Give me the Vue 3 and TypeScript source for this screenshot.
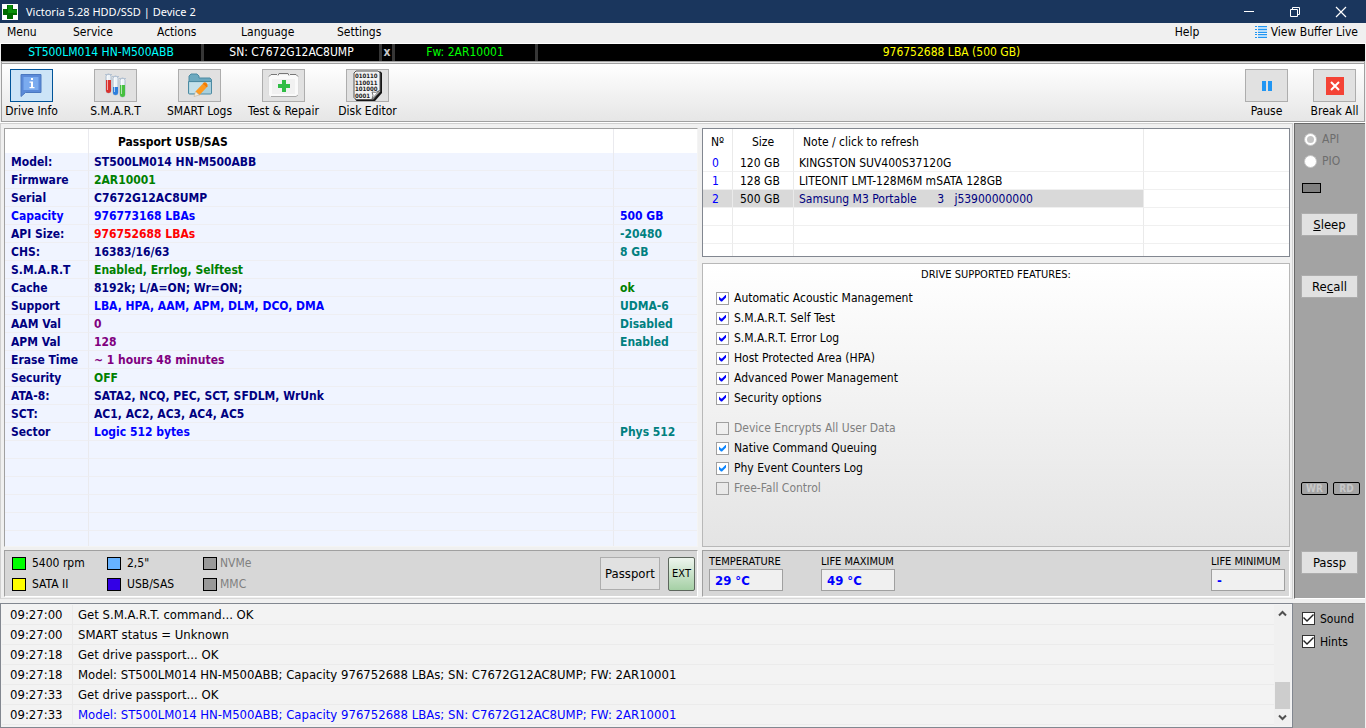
<script setup lang="ts">
interface PassportRow {
  name: string
  value: string
  extra?: string
  nameTone?: string
  valueTone?: string
  extraTone?: string
}

const menus = [
  { text: 'Menu', size: 'w66' },
  { text: 'Service', size: 'w84' },
  { text: 'Actions', size: 'w84' },
  { text: 'Language', size: 'w96' },
  { text: 'Settings', size: 'w96' },
]

const passport: PassportRow[] = [
  { name: 'Model:', value: 'ST500LM014 HN-M500ABB' },
  { name: 'Firmware', value: '2AR10001', valueTone: 'green' },
  { name: 'Serial', value: 'C7672G12AC8UMP' },
  { name: 'Capacity', value: '976773168 LBAs', extra: '500 GB', nameTone: 'blue', valueTone: 'blue', extraTone: 'blue' },
  { name: 'API Size:', value: '976752688 LBAs', extra: '-20480', valueTone: 'red' },
  { name: 'CHS:', value: '16383/16/63', extra: '8 GB' },
  { name: 'S.M.A.R.T', value: 'Enabled, Errlog, Selftest', valueTone: 'green' },
  { name: 'Cache', value: '8192k; L/A=ON; Wr=ON;', extra: 'ok', extraTone: 'green' },
  { name: 'Support', value: 'LBA, HPA, AAM, APM, DLM, DCO, DMA', extra: 'UDMA-6', valueTone: 'blue' },
  { name: 'AAM Val', value: '0', extra: 'Disabled', valueTone: 'purple' },
  { name: 'APM Val', value: '128', extra: 'Enabled', valueTone: 'purple' },
  { name: 'Erase Time', value: '~ 1 hours 48 minutes', valueTone: 'purple' },
  { name: 'Security', value: 'OFF', valueTone: 'green' },
  { name: 'ATA-8:', value: 'SATA2, NCQ, PEC, SCT, SFDLM, WrUnk' },
  { name: 'SCT:', value: 'AC1, AC2, AC3, AC4, AC5' },
  { name: 'Sector', value: 'Logic 512 bytes', extra: 'Phys 512', valueTone: 'blue' },
]

const drives = [
  { no: '0', size: '120 GB', note: 'KINGSTON SUV400S37120G', active: false },
  { no: '1', size: '128 GB', note: 'LITEONIT LMT-128M6M mSATA 128GB', active: false },
  { no: '2', size: '500 GB', note: 'Samsung M3 Portable      3   j53900000000', active: true },
]

const features = [
  { text: 'Automatic Acoustic Management', on: true, tone: 'deep' },
  { text: 'S.M.A.R.T. Self Test', on: true, tone: 'deep' },
  { text: 'S.M.A.R.T. Error Log', on: true, tone: 'deep' },
  { text: 'Host Protected Area (HPA)', on: true, tone: 'deep' },
  { text: 'Advanced Power Management', on: true, tone: 'deep' },
  { text: 'Security options', on: true, tone: 'deep' },
]

const moreFeatures = [
  { text: 'Device Encrypts All User Data', on: false, tone: 'off' },
  { text: 'Native Command Queuing', on: true, tone: 'sky' },
  { text: 'Phy Event Counters Log', on: true, tone: 'sky' },
  { text: 'Free-Fall Control', on: false, tone: 'off' },
]

const legend = [
  { text: '5400 rpm', tone: 'lime', off: false },
  { text: '2,5"', tone: 'sky', off: false },
  { text: 'NVMe', tone: 'none', off: true },
  { text: 'SATA II', tone: 'yellow', off: false },
  { text: 'USB/SAS', tone: 'indigo', off: false },
  { text: 'MMC', tone: 'none', off: true },
]

const log = [
  { time: '09:27:00', text: 'Get S.M.A.R.T. command... OK', last: false },
  { time: '09:27:00', text: 'SMART status = Unknown', last: false },
  { time: '09:27:18', text: 'Get drive passport... OK', last: false },
  { time: '09:27:18', text: 'Model: ST500LM014 HN-M500ABB; Capacity 976752688 LBAs; SN: C7672G12AC8UMP; FW: 2AR10001', last: false },
  { time: '09:27:33', text: 'Get drive passport... OK', last: false },
  { time: '09:27:33', text: 'Model: ST500LM014 HN-M500ABB; Capacity 976752688 LBAs; SN: C7672G12AC8UMP; FW: 2AR10001', last: true },
]
</script>

<template>
  <div class="app">
    <header class="titlebar">
      <svg class="logo" width="16" height="16" viewBox="0 0 16 16">
        <rect width="16" height="16" fill="#fff" />
        <path d="M5 1h6v4h4v6h-4v4H5v-4H1V5h4z" fill="#006b00" />
        <path d="M6 1h4v5h5v3H6z" fill="#0a8f0a" />
      </svg>
      <span class="title">Victoria 5.28 HDD/SSD | Device 2</span>
      <div class="win">
        <button type="button" aria-label="Minimize">
          <svg width="12" height="12" viewBox="0 0 12 12"><path d="M1 5.500h10" stroke="#fff" /></svg>
        </button>
        <button type="button" aria-label="Restore">
          <svg width="12" height="12" viewBox="0 0 12 12" fill="none" stroke="#fff"><path d="M1.500 3.500h7v7h-7zM3.500 3.500v-2h7v7h-2" /></svg>
        </button>
        <button type="button" aria-label="Close">
          <svg width="12" height="12" viewBox="0 0 12 12"><path d="M1 1l10 10M11 1L1 11" stroke="#fff" stroke-width="1.200" /></svg>
        </button>
      </div>
    </header>

    <nav class="menubar">
      <button v-for="m in menus" :key="m.text" type="button" :class="m.size">{{ m.text }}</button>
      <button type="button" class="help">Help</button>
      <button type="button" class="live">
        <svg width="12" height="12" viewBox="0 0 12 12" shape-rendering="crispEdges">
          <path d="M0 0h2v1H0zM0 3h2v1H0zM0 6h2v1H0zM0 8h2v1H0zM0 11h2v1H0zM3 0h9v1H3zM3 3h9v1H3zM3 6h9v1H3zM3 8h9v1H3zM3 11h9v1H3z" fill="#2196f3" />
          <path d="M3 1h9v2H3zM3 4h9v2H3zM3 9h9v2H3z" fill="#b5dcfb" />
        </svg>
        View Buffer Live
      </button>
    </nav>

    <div class="status">
      <span class="seg model">ST500LM014 HN-M500ABB</span>
      <span class="seg serial">SN: C7672G12AC8UMP</span>
      <button type="button" class="seg close">x</button>
      <span class="seg fw">Fw: 2AR10001</span>
      <span class="seg lba">976752688 LBA (500 GB)</span>
    </div>

    <div class="toolbar">
      <div class="tool">
        <button id="t-info" type="button" class="on">
          <svg width="23" height="25" viewBox="0 0 23 25">
            <path d="M1 1.500h20v18H5.500L1 23.500z" fill="#5b8ad8" stroke="#4a78c0" />
            <path d="M3.500 4h15v13H3.500z" fill="#7aabef" />
            <path d="M11 5h2v2h-2zM9.500 8.500H13V14h1.500v1.300h-5V14H11V9.800H9.500z" fill="#fff" />
          </svg>
        </button>
        <label for="t-info">Drive Info</label>
      </div>
      <div class="tool">
        <button id="t-smart" type="button">
          <svg width="22" height="26" viewBox="0 0 22 26">
            <rect x="1" y="1" width="5" height="19" rx="2.500" fill="#eef3f8" stroke="#9db0c4" stroke-width=".8" />
            <path d="M1 7h5v10.500a2.500 2.500 0 0 1-5 0z" fill="#d9322e" />
            <rect x="8" y="3" width="5" height="19" rx="2.500" fill="#eef3f8" stroke="#9db0c4" stroke-width=".8" />
            <path d="M8 14h5v5.500a2.500 2.500 0 0 1-5 0z" fill="#2f7fdc" />
            <rect x="15" y="5" width="5" height="19" rx="2.500" fill="#eef3f8" stroke="#9db0c4" stroke-width=".8" />
            <path d="M15 12h5v9.500a2.500 2.500 0 0 1-5 0z" fill="#46c040" />
            <path d="M2.500 3v14M9.500 5v14M16.500 7v14" stroke="#fff" stroke-opacity=".6" />
            <path d="M0 1.500h7M7 3.500h7M14 5.500h7" stroke="#b4c2d2" />
          </svg>
        </button>
        <label for="t-smart">S.M.A.R.T</label>
      </div>
      <div class="tool">
        <button id="t-logs" type="button">
          <svg width="26" height="25" viewBox="0 0 26 25">
            <path d="M2 6V3l2-2h6l2 2v2h11l1.500 1.500V20H2z" fill="#6da9bf" stroke="#4c8ba3" />
            <path d="M1.500 8.500h23V20q0 1-1 1h-21q-1 0-1-1z" fill="#a9d0dd" stroke="#4c8ba3" />
            <path d="M2.500 9.500h21L8 20H2.500z" fill="#c5e1ea" />
            <path d="M15.500 11l4 3.500-7 7.500-4-3.500z" fill="#ff9a1f" />
            <path d="M16.500 9.800q1.500-1 3 .3t1 3.200l-1 1.200-4-3.500z" fill="#f57c00" />
            <path d="M8.500 18.500l4 3.500-5.500 1.500z" fill="#f5ead8" stroke="#b5aa95" stroke-width=".5" />
          </svg>
        </button>
        <label for="t-logs">SMART Logs</label>
      </div>
      <div class="tool">
        <button id="t-test" type="button">
          <svg width="31" height="27" viewBox="0 0 31 27">
            <path d="M1 5l2-2.500h25L30 5v18l-2 2H3l-2-2z" fill="#fafafa" />
            <path d="M1 4.500l2-2h6M22 2.500h6l2 2M10 3.500l1-2h9l1 2" fill="none" stroke="#777" />
            <path d="M3 24.500h25l2-1.500" fill="none" stroke="#aaa" />
            <path d="M.5 5v17M30.500 5v17" stroke="#ddd" />
            <rect x="4" y="7" width="23" height="15" fill="#f1f1f1" />
            <path d="M14 8h4v4h4v4h-4v4h-4v-4h-4v-4h4z" fill="#30bd45" />
          </svg>
        </button>
        <label for="t-test">Test &amp; Repair</label>
      </div>
      <div class="tool">
        <button id="t-disk" type="button">
          <svg width="29" height="31" viewBox="0 0 29 31">
            <path d="M3.500 1.500h24l1.500 1.500v20l-7 8H3.500L2 29V3z" fill="#161616" />
            <path d="M3 1h22l2 2v18.500l-7 8H3l-2-2V3z" fill="#f2f2f2" stroke="#555" />
            <text x="2" y="8" class="bits">010110</text>
            <text x="2" y="15" class="bits">110011</text>
            <text x="2" y="21" class="bits">101000</text>
            <text x="2" y="28" class="bits">0001</text>
            <path d="M26.500 20.500l-7.500 8.500q2-4 0-7 4 1.500 7.500-1.500z" fill="#fff" stroke="#555" stroke-width=".8" />
          </svg>
        </button>
        <label for="t-disk">Disk Editor</label>
      </div>
      <div class="fill"></div>
      <div class="tools-right">
        <div class="tool">
          <button id="t-pause" type="button">
            <svg width="10" height="10" viewBox="0 0 10 10"><path d="M0 0h4v10H0zM6 0h4v10H6z" fill="#2196f3" /></svg>
          </button>
          <label for="t-pause">Pause</label>
        </div>
        <div class="tool">
          <button id="t-break" type="button">
            <svg width="18" height="18" viewBox="0 0 18 18"><rect width="18" height="18" fill="#f44336" /><path d="M5 5l8 8M13 5l-8 8" stroke="#fff" stroke-width="2" /></svg>
          </button>
          <label for="t-break">Break All</label>
        </div>
      </div>
    </div>

    <main class="main">
      <div class="work">
        <section class="left">
          <div class="frame passport">
            <table>
              <colgroup><col class="c-name" /><col /><col class="c-extra" /></colgroup>
              <thead>
                <tr><th></th><th class="cap">Passport USB/SAS</th><th></th></tr>
              </thead>
              <tbody>
                <tr v-for="r in passport" :key="r.name">
                  <td :class="r.nameTone || 'navy'">{{ r.name }}</td>
                  <td :class="r.valueTone || 'navy'">{{ r.value }}</td>
                  <td :class="r.extraTone || 'teal'">{{ r.extra }}</td>
                </tr>
                <tr v-for="n in 5" :key="n"><td></td><td></td><td></td></tr>
                <tr class="rest"><td></td><td></td><td></td></tr>
              </tbody>
            </table>
          </div>
          <div class="strip">
            <ul class="legend">
              <li v-for="l in legend" :key="l.text" :class="{ off: l.off }">
                <span class="swatch" :class="l.tone"></span>{{ l.text }}
              </li>
            </ul>
            <button type="button" class="btn big">Passport</button>
            <button type="button" class="ext">EXT</button>
          </div>
        </section>

        <section class="right">
          <div class="frame drives">
            <table>
              <colgroup><col class="d-no" /><col class="d-size" /><col class="d-note" /><col /></colgroup>
              <thead>
                <tr><th>Nº</th><th>Size</th><th class="note">Note / click to refresh</th><th></th></tr>
              </thead>
              <tbody>
                <tr v-for="d in drives" :key="d.no" :class="{ active: d.active }">
                  <td class="no">{{ d.no }}</td>
                  <td class="size">{{ d.size }}</td>
                  <td class="note">{{ d.note }}</td>
                  <td></td>
                </tr>
                <tr v-for="n in 2" :key="n"><td></td><td></td><td></td><td></td></tr>
                <tr class="rest"><td></td><td></td><td></td><td></td></tr>
              </tbody>
            </table>
          </div>

          <div class="features">
            <h2>DRIVE SUPPORTED FEATURES:</h2>
            <div class="group">
              <label v-for="f in features" :key="f.text" class="check" :class="f.tone">
                <input type="checkbox" :checked="f.on" />{{ f.text }}
              </label>
            </div>
            <div class="group">
              <label v-for="f in moreFeatures" :key="f.text" class="check" :class="f.tone">
                <input type="checkbox" :checked="f.on" :disabled="!f.on" />{{ f.text }}
              </label>
            </div>
          </div>

          <div class="strip temps">
            <label class="temp">TEMPERATURE<input type="text" readonly value="29 °C" /></label>
            <label class="temp">LIFE MAXIMUM<input type="text" readonly value="49 °C" /></label>
            <label class="temp min">LIFE MINIMUM<input type="text" readonly value="-" /></label>
          </div>
        </section>
      </div>

      <aside class="side">
        <label class="mode"><input type="radio" name="mode" checked disabled />API</label>
        <label class="mode"><input type="radio" name="mode" disabled />PIO</label>
        <div class="led"></div>
        <button type="button" class="btn small sleep"><u>S</u>leep</button>
        <button type="button" class="btn small recall">Re<u>c</u>all</button>
        <div class="fill"></div>
        <div class="flags"><span>WR</span><span>RD</span></div>
        <button type="button" class="btn small passp">Passp</button>
      </aside>
    </main>

    <footer class="bottom">
      <div class="log">
        <table>
          <colgroup><col class="l-time" /><col /></colgroup>
          <tbody>
            <tr v-for="(l, i) in log" :key="i">
              <td>{{ l.time }}</td>
              <td :class="{ blue: l.last }">{{ l.text }}</td>
            </tr>
          </tbody>
        </table>
        <div class="scroll">
          <button type="button" aria-label="Scroll up"><svg width="9" height="7" viewBox="0 0 9 7"><path d="M1 5.500l3.500-3.500L8 5.500" fill="none" stroke="#505050" stroke-width="2" /></svg></button>
          <div class="track"><div class="thumb"></div></div>
          <button type="button" aria-label="Scroll down"><svg width="9" height="7" viewBox="0 0 9 7"><path d="M1 1.500L4.500 5 8 1.500" fill="none" stroke="#505050" stroke-width="2" /></svg></button>
        </div>
      </div>
      <div class="opts">
        <label class="check plain"><input type="checkbox" checked />Sound</label>
        <label class="check plain"><input type="checkbox" checked />Hints</label>
      </div>
    </footer>
  </div>
</template>

<style>
body {
  margin: 0;
}
</style>

<style scoped>
.app {
  box-sizing: border-box;
  min-height: 100vh;
  display: flex;
  flex-direction: column;
  background: #f0f0f0;
  color: #000;
  font: 12px/16px "DejaVu Sans Condensed", "DejaVu Sans", sans-serif;
  font-stretch: condensed;
}
.app *,
.app *::before {
  box-sizing: border-box;
}
button,
input {
  margin: 0;
  padding: 0;
  font: inherit;
  color: inherit;
  border: 0;
  border-radius: 0;
  background: none;
}
svg {
  display: block;
}
.fill {
  flex: 1;
}

.titlebar {
  display: flex;
  align-items: center;
  height: 23px;
  padding-left: 2px;
  background: #1a365d;
  color: #fff;
  font-family: "Noto Sans", "Open Sans", sans-serif;
  font-size: 11px;
}
.title {
  flex: 1;
  padding-left: 8px;
}
.win {
  display: flex;
  padding-right: 2px;
}
.win button {
  width: 46px;
  height: 20px;
  display: flex;
  align-items: center;
  justify-content: center;
}

.menubar {
  display: flex;
  align-items: center;
  height: 21px;
  padding: 0 8px 2px 7px;
  border-bottom: 1px solid #fff;
}
.menubar button {
  text-align: left;
  white-space: nowrap;
}
.w66 {
  width: 66px;
}
.w84 {
  width: 84px;
}
.w96 {
  width: 96px;
}
.menubar .help {
  margin-left: auto;
  width: 80px;
}
.menubar .live {
  display: flex;
  align-items: center;
  gap: 4px;
}

.status {
  display: flex;
  height: 17px;
  margin: 0 1px;
  background: #000;
}
.seg {
  text-align: center;
  line-height: 17px;
  white-space: nowrap;
  border-right: 3px solid #363636;
}
.model {
  width: 203px;
  color: #00ffff;
}
.serial {
  width: 178px;
  color: #fff;
}
.close {
  width: 13px;
  color: #c8c8c8;
  font-weight: bold;
}
.fw {
  width: 143px;
  color: #00ff00;
}
.lba {
  flex: 1;
  border: 0;
  color: #ffff00;
}

.toolbar {
  display: flex;
  gap: 25px;
  height: 61px;
  margin: 0 1px;
  padding-top: 5px;
  border: 1px solid #a0a0a0;
  border-top: 3px double #a0a0a0;
  background: linear-gradient(#fff, #e6e6e6);
}
.tools-right {
  display: flex;
  gap: 9px;
}
.tool {
  width: 59px;
  display: flex;
  flex-direction: column;
  align-items: center;
}
.tool button {
  width: 43px;
  height: 33px;
  display: flex;
  align-items: center;
  justify-content: center;
  border: 1px solid #adadad;
  background: #e1e1e1;
}
.tool button.on {
  border-color: #005499;
  background: #cce4f7;
}
.tool label {
  line-height: 18px;
  white-space: nowrap;
}
.bits {
  font: bold 6px "DejaVu Sans Condensed", "DejaVu Sans", sans-serif;
  fill: #222;
}

.main {
  flex: 1;
  display: flex;
  border-top: 1px solid #fff;
}
.work {
  flex: 1;
  display: grid;
  grid-template-columns: 694fr 588fr;
  gap: 4px;
  padding: 4px 2px 1px 3px;
  border: 1px solid #d0d0d0;
  border-bottom-color: #d8d8d8;
}
.left,
.right {
  display: flex;
  flex-direction: column;
  min-width: 0;
}
.frame {
  border: 1px solid #828790;
  background: #fff;
}
table {
  width: 100%;
  border-collapse: separate;
  border-spacing: 0;
  table-layout: fixed;
}
td,
th {
  padding: 0 5px;
  font-weight: inherit;
  text-align: left;
  white-space: pre;
  overflow: hidden;
}
.passport {
  flex: 1;
  display: flex;
  border-color: #a0a0a0 #f4f4f4 #f4f4f4 #a0a0a0;
  font-weight: bold;
}
.passport td,
.passport th {
  height: 18px;
  padding: 2px 5px 0;
  line-height: 15px;
  border-bottom: 1px solid #eeeef2;
  border-right: 1px solid #eaeaee;
}
.passport td {
  background: #f0f4ff;
}
.passport th {
  height: 24px;
  border-bottom: 0;
}
.passport td:first-child,
.passport td:last-child {
  padding-left: 6px;
}
.passport .cap {
  padding-left: 29px;
}
.passport tr :last-child {
  border-right: 0;
}
.passport .rest td {
  height: auto;
  padding: 0;
  border-bottom: 0;
}
.c-name {
  width: 84px;
}
.c-extra {
  width: 83px;
}
.navy {
  color: #000080;
}
.green {
  color: #008000;
}
.blue {
  color: #0000ff;
}
.red {
  color: #ff0000;
}
.teal {
  color: #008080;
}
.purple {
  color: #800080;
}

.strip {
  display: flex;
  align-items: center;
  height: 47px;
  margin-top: 3px;
  border: 1px solid #a0a0a0;
  border-right-color: #fff;
  border-bottom-color: #fff;
  background: #d7d7d7;
}
.legend {
  flex: 1;
  display: grid;
  grid-template-columns: 95px 96px 96px;
  grid-auto-rows: 21px;
  margin: 0;
  padding: 0 0 0 7px;
  list-style: none;
}
.legend li {
  display: flex;
  align-items: center;
  gap: 6px;
  white-space: nowrap;
}
.legend .off {
  gap: 3px;
  color: #808080;
}
.swatch {
  width: 14px;
  height: 13px;
  border: 1px solid #000;
  background: #999;
}
.swatch.lime {
  background: #00ff00;
}
.swatch.sky {
  background: #66b2ff;
}
.swatch.yellow {
  background: #ffff00;
}
.swatch.indigo {
  background: #3300e6;
}
.btn {
  border: 1px solid #adadad;
  background: #e1e1e1;
  text-align: center;
  font-size: 13px;
}
.big {
  width: 60px;
  height: 33px;
}
.ext {
  width: 27px;
  height: 34px;
  margin: 0 2px 0 8px;
  border: 1px solid #5c665c;
  border-radius: 2px;
  background: linear-gradient(#eef5ee, #a5d0a5);
  font-size: 11px;
}

.drives {
  height: 129px;
}
.drives td,
.drives th {
  height: 18px;
  padding: 2px 5px 0;
  line-height: 15px;
  border-bottom: 1px solid #f0f0f0;
  border-right: 1px solid #eaeaea;
}
.drives th {
  height: 25px;
  border-bottom: 0;
  text-align: center;
}
.drives tr :last-child {
  border-right: 0;
}
.drives th.note {
  padding-left: 9px;
  text-align: left;
}
.drives td.no {
  padding-left: 9px;
  color: #0000ff;
}
.drives td.size {
  padding: 2px 7px 0;
}
.drives .rest td {
  height: 12px;
  padding: 0;
  border-bottom: 0;
}
.active td:not(:last-child) {
  background: #d9d9d9;
}
.active .note {
  color: #000080;
}
.d-no {
  width: 30px;
}
.d-size {
  width: 61px;
}
.d-note {
  width: 350px;
}

.features {
  flex: 1;
  margin-top: 6px;
  padding: 3px 13px 0;
  border: 1px solid #b8b8b8;
  background: linear-gradient(#fff, #e4e4e4);
}
.features h2 {
  margin: 0 0 5px;
  font-size: 11px;
  font-weight: normal;
  line-height: 16px;
  text-align: center;
}
.group {
  display: flex;
  flex-direction: column;
  margin-bottom: 10px;
}
.check {
  display: flex;
  align-items: center;
  gap: 5px;
  height: 20px;
  white-space: nowrap;
}
.check input {
  appearance: none;
  flex: none;
  width: 13px;
  height: 13px;
  border: 1px solid #a0a0a0;
  background: #fff;
  display: grid;
  place-items: center;
}
.check input:checked::before {
  content: "";
  width: 7px;
  height: 7px;
  background: #0000ff;
  clip-path: polygon(0 2px, 2px 4px, 3px 4px, 7px 0, 7px 3px, 3px 7px, 2px 7px, 0 5px);
}
.check.sky input:checked::before {
  background: #0a84ff;
}
.check.off {
  color: #808080;
}
.check.off input {
  background: transparent;
}

.temps {
  align-items: flex-start;
  gap: 38px;
  padding: 3px 4px 0 6px;
}
.temp {
  width: 74px;
  font-size: 11px;
  line-height: 15px;
  white-space: nowrap;
}
.temp input {
  display: block;
  width: 74px;
  height: 22px;
  padding: 0 5px;
  border: 1px solid #a0a0a0;
  background: #f0f0f0;
  color: #0000ff;
  font-size: 13px;
  font-weight: bold;
}
.temp.min {
  margin-left: auto;
}

.side {
  width: 71px;
  margin: 0 1px 0 1px;
  padding: 4px 5px 24px 6px;
  display: flex;
  flex-direction: column;
  border-left: 1px solid #696969;
  border-top: 1px solid #696969;
  border-bottom: 1px solid #fff;
  background: #a3a3a3;
}
.mode {
  display: flex;
  align-items: center;
  gap: 5px;
  height: 22px;
  padding-left: 3px;
  color: #6d6d6d;
}
.mode input {
  appearance: none;
  width: 13px;
  height: 13px;
  border: 1px solid #c4c4c4;
  border-radius: 50%;
  background: #fff;
  display: grid;
  place-items: center;
}
.mode input:checked::before {
  content: "";
  width: 7px;
  height: 7px;
  border-radius: 50%;
  background: #c4c4c4;
}
.led {
  width: 19px;
  height: 10px;
  margin: 11px 0 20px 1px;
  border: 1px solid #000;
  background: #808080;
}
.small {
  width: 57px;
  height: 23px;
}
.recall {
  margin-top: 39px;
}
.flags {
  display: flex;
  gap: 5px;
}
.flags span {
  width: 27px;
  height: 13px;
  border: 1px solid #000;
  border-radius: 2px;
  color: #c8c8c8;
  font-size: 10px;
  line-height: 11px;
  font-weight: bold;
  text-align: center;
}
.passp {
  margin-top: 56px;
}

.bottom {
  display: flex;
  margin-top: 4px;
  padding-right: 1px;
}
.log {
  flex: 1;
  display: flex;
  height: 125px;
  padding: 1px;
  border: 1px solid #828790;
  background: #f3f3f3;
  font-size: 13px;
}
.log table {
  align-self: flex-start;
}
.log td {
  height: 20px;
  padding: 1px 5px 0;
  border-bottom: 1px solid #ebebeb;
  border-right: 1px solid #ebebeb;
}
.log td:first-child {
  padding-left: 8px;
}
.log tr :last-child {
  border-right: 0;
}
.l-time {
  width: 71px;
}
.scroll {
  width: 17px;
  flex: none;
  display: flex;
  flex-direction: column;
  padding: 0 1px;
  background: #f0f0f0;
}
.scroll button {
  height: 17px;
  display: flex;
  align-items: center;
  justify-content: center;
}
.track {
  flex: 1;
  display: flex;
  flex-direction: column;
  justify-content: flex-end;
}
.thumb {
  height: 27px;
  background: #cdcdcd;
}
.opts {
  width: 72px;
  padding: 3px 0 0 9px;
  border-top: 1px solid #a0a0a0;
  background: #ababab;
}
.plain {
  height: 23px;
}
.check.plain input {
  border-color: #333;
}
.check.plain input:checked::before {
  width: 11px;
  height: 9px;
  background: #222;
  clip-path: polygon(0 4px, 1px 3px, 4px 6px, 10px 0, 11px 1px, 4px 8px);
}
</style>
